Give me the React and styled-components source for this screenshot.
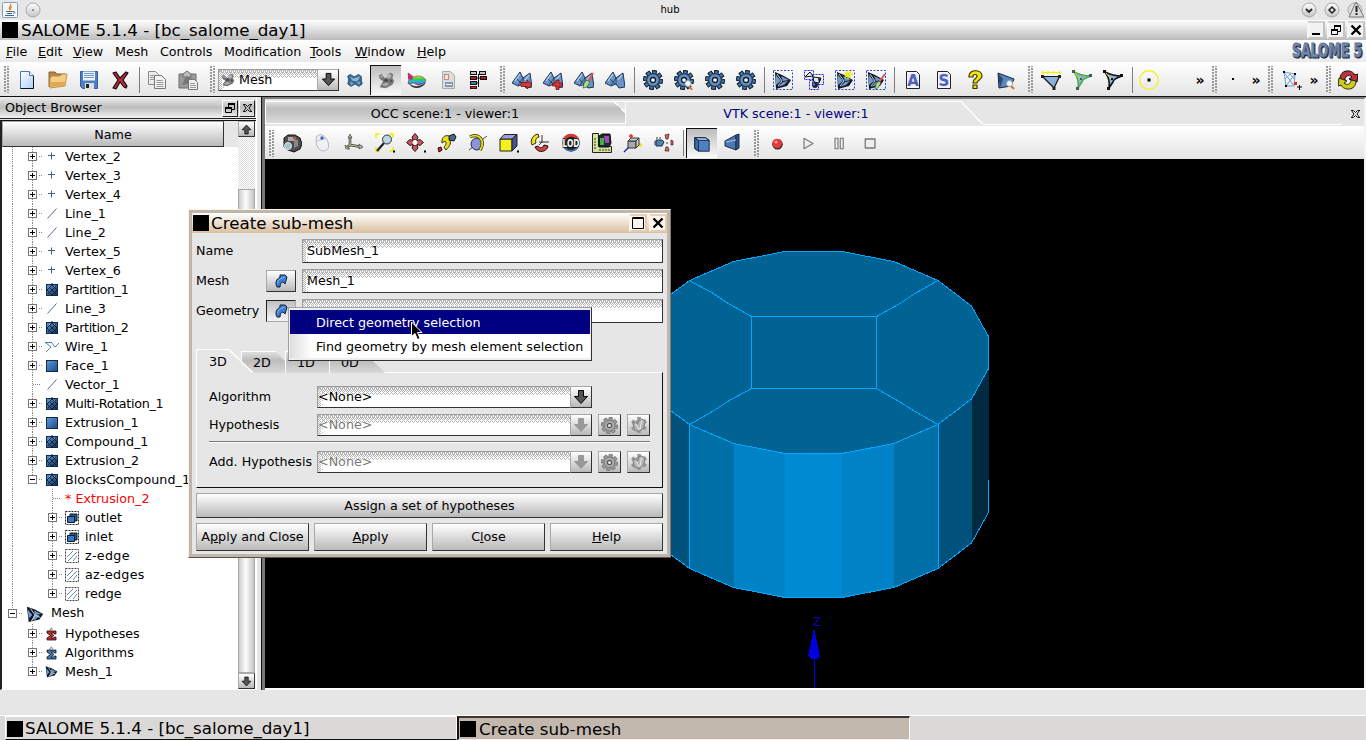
import React from "react";
import styled, { createGlobalStyle, css } from "styled-components";

const Global = createGlobalStyle`
  * { box-sizing: border-box; }
  body { margin: 0; background: #e6e6e6; overflow: hidden; }
  svg { display: block; flex: none; }
`;

const Screen = styled.div`
  position: relative;
  width: 1366px;
  height: 740px;
  display: flex;
  flex-direction: column;
  overflow: hidden;
  background: #e6e6e6;
  color: #000;
  font: 12.7px/16px "DejaVu Sans", sans-serif;
  white-space: nowrap;
`;

/* ---------- frame bars ---------- */
const HubBar = styled.div`
  flex: none;
  height: 20px;
  display: flex;
  align-items: center;
  justify-content: space-between;
  background: #e7e7e7;
  font-size: 10px;
  padding: 0 0 0 2px;
`;
const HubSide = styled.div`
  display: flex;
  width: ${(p) => p.$w}px;
  gap: 7px;
  align-items: center;
`;

const gloss = "linear-gradient(#ffffff, #b9b9b9)";

const TitleBar = styled.div`
  flex: none;
  height: 20px;
  display: flex;
  align-items: center;
  padding: 0 1px 0 2px;
  background: linear-gradient(#ffffff, #bcbcbc);
  font-size: 16.7px;
  line-height: 18px;
`;
const BlackSquare = styled.span`
  flex: none;
  width: 16px;
  height: 16px;
  margin-right: ${(p) => p.$gap ?? 3}px;
  background: #000;
`;
const TitleText = styled.span`
  flex: 1;
`;
const FrameButton = styled.span`
  width: 18px;
  height: 18px;
  margin-left: 2px;
  display: flex;
  align-items: center;
  justify-content: center;
  border: 2px solid ${(p) => (p.$warm ? "#e2cbb1" : "#c2c2c2")};
  border-left-color: ${(p) => (p.$warm ? "#fff4e6" : "#f6f6f6")};
  border-top-color: ${(p) => (p.$warm ? "#e6d2bb" : "#d0d0d0")};
  background: ${(p) => (p.$warm ? "#fdf6ee" : "#f2f2f2")};
`;

const MenuBar = styled.div`
  flex: none;
  height: 22px;
  display: flex;
  align-items: center;
  padding: 2px 0 0 6px;
  background: linear-gradient(#ffffff, #e9e9e9);
`;
const MenuItem = styled.span`
  width: ${(p) => p.$w}px;
`;
const Logo = styled.div`
  margin-left: auto;
`;

/* ---------- toolbars ---------- */
const ToolBar = styled.div`
  flex: none;
  height: ${(p) => p.$h}px;
  display: flex;
  align-items: center;
  padding-top: ${(p) => p.$pt || 0}px;
  background: linear-gradient(#ffffff, #e4e4e4);
`;
const ToolButton = styled.span`
  flex: none;
  width: 31px;
  height: 30px;
  display: flex;
  align-items: center;
  justify-content: center;
  ${(p) =>
    p.$pressed &&
    css`
      border-left: 1px solid #111;
      border-top: 1px solid #111;
      background: linear-gradient(#bdbdbd, #fafafa);
    `}
`;
const Handle = styled.span`
  flex: none;
  width: 5px;
  height: 27px;
  margin: 0 ${(p) => p.$r}px 0 ${(p) => p.$l}px;
  background:
    linear-gradient(#999 2px, transparent 2px) 0 0 / 2px 3px repeat-y,
    linear-gradient(#999 2px, transparent 2px) 3px 2px / 2px 3px repeat-y;
`;
const Sep = styled.span`
  flex: none;
  width: 1px;
  height: 26px;
  margin: 0 ${(p) => p.$r ?? 3}px 0 ${(p) => p.$l ?? 2}px;
  background: #7d7d7d;
`;
const More = styled.span`
  flex: none;
  width: 12px;
  text-align: center;
  font-weight: bold;
  font-size: 14px;
  margin-left: ${(p) => p.$l}px;
`;

/* ---------- sunken fields ---------- */
const dot = (fill) => `linear-gradient(90deg, #b4b4b4 ${fill}px, transparent ${fill}px)`;
const dither = css`
  background:
    ${dot(3)} 0 0 / 4px 1px repeat-x,
    ${dot(1)} 0 1px / 2px 1px repeat-x,
    ${dot(3)} 2px 2px / 4px 1px repeat-x,
    ${dot(1)} 1px 3px / 2px 1px repeat-x,
    ${dot(1)} 0 4px / 2px 1px repeat-x,
    ${dot(1)} 1px 5px / 4px 1px repeat-x,
    ${dot(1)} 0 6px / 2px 1px repeat-x,
    ${dot(1)} 3px 7px / 4px 1px repeat-x,
    linear-gradient(#b4b4b4 1px, transparent 1px) 0 0 / 1px 2px repeat-y,
    linear-gradient(#b4b4b4 1px, transparent 1px) 1px 1px / 1px 2px repeat-y,
    linear-gradient(#b4b4b4 1px, transparent 1px) 2px 0 / 1px 2px repeat-y,
    linear-gradient(#b4b4b4 1px, transparent 1px) 4px 1px / 1px 4px repeat-y,
    #fff;
`;
const Field = styled.div`
  width: ${(p) => p.$w}px;
  height: 24px;
  padding: 0 4px;
  line-height: 22px;
  border: 1px solid #9c9c9c;
  border-right-color: #333;
  border-bottom-color: #333;
  ${dither}
`;
const ComboBox = styled.div`
  width: ${(p) => p.$w}px;
  height: 22px;
  display: flex;
  align-items: stretch;
  color: ${(p) => (p.$off ? "#7a7a7a" : "#000")};
`;
const ComboText = styled.div`
  flex: 1;
  display: flex;
  align-items: center;
  gap: 4px;
  padding-left: ${(p) => p.$pad || 0}px;
  border: 1px solid #9c9c9c;
  border-right: 0;
  border-bottom-color: #333;
  ${dither}
`;
const raised = css`
  border: 1px solid #a8a8a8;
  border-right-color: #333;
  border-bottom-color: #333;
  background: ${gloss};
`;
const ComboArrow = styled.div`
  width: 22px;
  display: flex;
  align-items: center;
  justify-content: center;
  ${raised}
`;

/* ---------- object browser ---------- */
const Main = styled.div`
  flex: none;
  height: 594px;
  display: flex;
  border-top: 1px solid #111;
`;
const Dock = styled.div`
  width: 256px;
  display: flex;
  flex-direction: column;
`;
const DockTitle = styled.div`
  height: 22px;
  display: flex;
  align-items: center;
  padding: 1px 0 0 5px;
  background: linear-gradient(#ededed, #bdbdbd 50%, #f2f2f2);
  border-bottom: 1px solid #222;
`;
const DockLabel = styled.span`
  flex: 1;
`;
const DockButton = styled.span`
  width: 16px;
  height: 17px;
  margin-right: 1px;
  display: flex;
  align-items: center;
  justify-content: center;
  border: 1px solid #fff;
  border-right-color: #222;
  border-bottom-color: #222;
`;
const TreeFrame = styled.div`
  flex: 1;
  display: flex;
  margin-top: 1px;
  border-top: 1px solid #111;
  border-left: 2px solid #222;
  border-bottom: 1px solid #fff;
  background: #fff;
`;
const TreeBody = styled.div`
  width: 236px;
  display: flex;
  flex-direction: column;
`;
const HeaderStrip = styled.div`
  height: 26px;
  flex: none;
  background: #e6e6e6;
`;
const HeaderCell = styled.div`
  width: 222px;
  height: 26px;
  line-height: 25px;
  text-align: center;
  ${raised}
`;
const Row = styled.div`
  height: ${(p) => p.$h || 19}px;
  display: flex;
  align-items: center;
  padding-left: 1px;
  color: ${(p) => p.$c || "#000"};
`;
const Name = styled.span`
  letter-spacing: ${(p) => p.$ls || 0}px;
  margin-left: ${(p) => p.$l || 0}px;
  padding-bottom: ${(p) => p.$pb || 0}px;
`;
const Guide = styled.span`
  flex: none;
  width: 20px;
  height: 100%;
  display: flex;
  align-items: center;
  ${(p) =>
    p.$v !== "none" &&
    css`
      background: linear-gradient(#8a8a8a 1px, transparent 1px) 9px 0 / 1px 2px repeat-y;
    `}
  ${(p) =>
    p.$v === "half" &&
    css`
      background: repeating-linear-gradient(#8a8a8a 0 1px, transparent 1px 2px) 9px 0 / 1px 10px no-repeat;
    `}
`;
const HDots = styled.span`
  width: ${(p) => p.$w}px;
  height: 1px;
  margin-left: ${(p) => p.$l || 0}px;
  background: linear-gradient(90deg, #8a8a8a 1px, transparent 1px) 0 0 / 2px 1px;
`;
const Expander = styled.span`
  flex: none;
  width: 9px;
  height: 9px;
  margin: 0 2px 0 5px;
  border: 1px solid #777;
  background:
    linear-gradient(#000, #000) center / 5px 1px no-repeat,
    linear-gradient(#000, #000) center / ${(p) => (p.$open ? "0 0" : "1px 5px")} no-repeat,
    #fff;
`;
const RowIcon = styled.span`
  flex: none;
  width: ${(p) => p.$w}px;
  padding-left: ${(p) => p.$l}px;
`;
const ScrollBar = styled.div`
  width: 17px;
  display: flex;
  flex-direction: column;
  align-items: stretch;
  background: repeating-conic-gradient(#dcdcdc 0 25%, #fff 0 50%) 0 0 / 2px 2px;
`;
const ScrollArrow = styled.div`
  height: 16px;
  display: flex;
  align-items: center;
  justify-content: center;
  ${raised}
`;
const ScrollThumb = styled.div`
  flex: 1;
  margin-top: 52px;
  border: 1px solid #a8a8a8;
  background: linear-gradient(90deg, #ccc, #fdfdfd 45%, #c4c4c4);
`;
const Splitter = styled.div`
  width: 9px;
  background: linear-gradient(90deg, #fff 1px, #e6e6e6 1px 5px, #111 5px 6px, #777 6px);
`;

/* ---------- viewer ---------- */
const Viewer = styled.div`
  flex: 1;
  display: flex;
  flex-direction: column;
  border-top: 2px solid #7c7c7c;
  border-right: 2px solid #f4f4f4;
  border-bottom: 2px solid #fff;
`;
const ViewTabs = styled.div`
  height: 27px;
  display: flex;
  padding-top: 2px;
  background: #e6e6e6;
`;
const OccTab = styled.div`
  width: 361px;
  height: 23px;
  padding-right: 1px;
  text-align: center;
  line-height: 24px;
  border: 1px solid #fff;
  background:
    linear-gradient(to top right, transparent 50%, #fff 50%, #fff 56%, #e6e6e6 56%) right top / 11px 11px no-repeat,
    linear-gradient(#e0e0e0, #bfbfbf 30%, #c8c8c8 60%, #dcdcdc);
`;
const VtkTab = styled.div`
  width: 335px;
  height: 24px;
  padding-left: 5px;
  line-height: 24px;
  text-align: center;
  color: #000080;
  border-top: 1px solid #fff;
`;
const TabTail = styled.div`
  flex: 1;
  height: 24px;
  border-bottom: 1px solid #fff;
`;
const TabClose = styled.div`
  width: 22px;
  padding: 8px 0 0 8px;
`;
const Canvas = styled.div`
  flex: 1;
  background: #000;
  overflow: hidden;
`;

/* ---------- dialog ---------- */
const Dialog = styled.div`
  position: absolute;
  left: 188px;
  top: 209px;
  width: 483px;
  height: 349px;
  display: flex;
  flex-direction: column;
  border: 1px solid #fff3e4;
  border-right-color: #84796e;
  border-bottom-color: #5a524a;
  box-shadow: inset 0 0 0 3px #bfb5aa;
  padding: 3px;
  background: #e6e6e6;
`;
const DialogTitle = styled.div`
  flex: none;
  height: 20px;
  display: flex;
  align-items: center;
  padding-left: 1px;
  margin-bottom: 1px;
  font-size: 16.7px;
  line-height: 20px;
  background: linear-gradient(#ffffff, #dabf9f);
`;
const DialogBody = styled.div`
  display: flex;
  flex-direction: column;
  padding: 5px 4px 0 4px;
  background: #e6e6e6;
`;
const FormRow = styled.div`
  display: flex;
  align-items: center;
  height: 24px;
  margin-bottom: 6px;
`;
const Label = styled.span`
  width: ${(p) => p.$w}px;
  padding-left: ${(p) => p.$l || 0}px;
  flex: none;
`;
const IconButton = styled.span`
  flex: none;
  width: ${(p) => p.$w || 23}px;
  height: 22px;
  margin-right: ${(p) => p.$r || 0}px;
  display: flex;
  align-items: center;
  justify-content: center;
  ${raised}
  ${(p) =>
    p.$down &&
    css`
      border-color: #222 #aaa #aaa #222;
      background: linear-gradient(#c0c0c0, #f4f4f4);
    `}
`;
const TabRow = styled.div`
  height: 24px;
  margin-top: 20px;
  display: flex;
  position: relative;
`;
const TabShape = styled.div`
  flex: none;
  width: 56px;
  margin-left: ${(p) => p.$l || 0}px;
  margin-top: 2px;
  height: 22px;
  padding: 3px 0 0 11px;
  border-left: 1px solid #fff;
  border-top: 1px solid #fff;
  background: linear-gradient(#dedede, #bdbdbd 40%, #d8d8d8);
  clip-path: polygon(0 0, calc(100% - 22px) 0, 100% 100%, 0 100%);
`;
const ActiveTab = styled.div`
  flex: none;
  width: 57px;
  height: 24px;
  margin-right: -12px;
  padding: 5px 0 0 13px;
  z-index: 1;
  background: linear-gradient(#fff, #fff) 0 0 / 1px 100% no-repeat, linear-gradient(#fff, #fff) 0 0 / 33px 1px no-repeat,
    #e6e6e6;
  clip-path: polygon(0 0, 33px 0, 100% 100%, 0 100%);
`;
const SlopeLine = styled.svg`
  position: absolute;
  left: 33px;
  top: 0;
  z-index: 2;
`;
const Pane = styled.div`
  height: 116px;
  margin-top: -1px;
  padding: 13px 12px 0 11px;
  border: 1px solid #fff;
  border-right-color: #111;
  border-bottom-color: #111;
`;
const PaneRow = styled.div`
  display: flex;
  align-items: center;
  height: 22px;
  margin-bottom: ${(p) => p.$mb}px;
`;
const PaneRule = styled.div`
  height: 2px;
  border-top: 1px solid #777;
  border-bottom: 1px solid #fff;
  margin: 5px 0 8px 1px;
`;
const Button = styled.div`
  flex: 1;
  text-align: center;
  ${raised}
  height: ${(p) => p.$h}px;
  line-height: ${(p) => p.$h - 2}px;
`;
const ButtonRow = styled.div`
  display: flex;
  gap: 5px;
  margin-top: 5px;
`;
const Popup = styled.div`
  position: absolute;
  left: 288px;
  top: 307px;
  width: 304px;
  height: 54px;
  padding: 2px 1px;
  border: 1px solid #a0a0a0;
  border-right-color: #333;
  border-bottom-color: #333;
  background: #eee;
`;
const PopupItem = styled.div`
  height: 24px;
  line-height: 26px;
  padding-left: 26px;
  color: ${(p) => (p.$on ? "#fff" : "#000")};
  background: ${(p) => (p.$on ? "#000080" : "linear-gradient(90deg, #dedede, #fff 22px)")};
`;
const Cursor = styled.svg`
  position: absolute;
  left: 410px;
  top: 321px;
`;

/* ---------- bottom ---------- */
const StatusBar = styled.div`
  flex: none;
  height: 26px;
  border-bottom: 1px solid #fff;
  background: #e6e6e6;
`;
const TaskBar = styled.div`
  flex: none;
  height: 24px;
  display: flex;
  padding-left: 5px;
  background: #dbd9d7;
  font-size: 16.7px;
  line-height: 21px;
`;
const Task = styled.div`
  width: ${(p) => p.$w}px;
  display: flex;
  align-items: center;
  padding: 1px 0 0 1px;
  border: 1px solid #fff;
  border-bottom: 1px solid #111;
  ${(p) =>
    p.$down &&
    css`
      background: #c2b8ae;
      border-top: 2px solid #3a3530;
      border-left: 2px solid #111;
      border-bottom: 1px solid #f6efe8;
    `}
`;

/* ---------- icons ---------- */
const Ico = ({ s = 20, children }) => (
  <svg width={s} height={s} viewBox="0 0 20 20" strokeLinejoin="round">
    {children}
  </svg>
);
const BLUE = "#5c86bb";

const NewDoc = () => (
  <Ico>
    <defs>
      <linearGradient id="doc" x2="1" y2="1"><stop offset="0" stopColor="#fff" /><stop offset="1" stopColor="#a9cdf8" /></linearGradient>
    </defs>
    <path d="M3.500 1.500h9l4 4v13h-13z" fill="url(#doc)" stroke="#4a76b5" />
    <path d="M16.500 6v12.500h-13" fill="none" stroke="#111" />
    <path d="M12.500 1.500v4h4" fill="#fff" stroke="#4a76b5" />
  </Ico>
);
const Folder = () => (
  <Ico>
    <path d="M1 17V2h6l2 2h8v4" fill="#b98445" stroke="#8c6228" />
    <path d="M2 8l2-2h8l2-2h5l-2 12-15 2z" fill="#f3cd84" stroke="#c3934b" />
    <path d="M3 12h14l-1 4-13 1z" fill="#e0a852" />
  </Ico>
);
const Floppy = () => (
  <Ico>
    <path d="M1.500 1.500h17v17h-15l-2-2z" fill="#4f7fc0" stroke="#2f5fa3" />
    <path d="M4 1.500h12v9H4z" fill="#eef4fb" />
    <path d="M5 3.500h10M5 5.500h10M5 7.500h10" stroke="#6f97c9" />
    <path d="M6 13h9v6H6z" fill="#ddd" />
    <path d="M7 14h3v4H7z" fill="#222" />
  </Ico>
);
const Cross = () => (
  <Ico>
    <path d="M3 3l3-1 4 6 6-6 2 1-5 7 4 6-1 2-2-1-4-5-4 7-3-1 5-8z" fill="#b5303a" stroke="#140406" strokeWidth="1.200" />
  </Ico>
);
const Copy = () => (
  <Ico>
    <path d="M1.500 1.500h7l3 3v10h-10z" fill="#ececec" stroke="#8a8a8a" />
    <path d="M7.500 5.500h7l4 4v9h-11z" fill="#f2f2f2" stroke="#7a7a7a" />
    <path d="M3 5.500h4M3 7.500h4M3 9.500h4M9.500 10.500h6M9.500 12.500h7M9.500 14.500h7M9.500 16.500h7" stroke="#999" />
  </Ico>
);
const Paste = () => (
  <Ico>
    <path d="M1 4h17v14H1z" fill="#9a9a9a" stroke="#6d6d6d" />
    <path d="M5 4l4-3 4 3v3H5z" fill="#bbb" stroke="#6d6d6d" />
    <path d="M4 15l3-7 5-1 3 3-5 4z" fill="#777" />
    <path d="M10.500 9.500h6l3 3v7h-9z" fill="#f0f0f0" stroke="#777" />
    <path d="M12 13.500h5M12 15.500h6M12 17.500h6" stroke="#999" />
  </Ico>
);
const MeshBlob = ({ s = 17 }) => (
  <Ico s={s}>
    <path d="M1 4l3-2 4 5 3-1V3l4-2 3 2-1 4 2 4-2 4-8 4-7-1 2-4 2-3-4-3z" fill="#777" />
    <path d="M10 3l3-1 3 2-1 3-4 1z" fill="#b4b4b4" />
    <path d="M4 15l6-3 3 2-4 3z" fill="#aaa" />
    <path d="M2 4l2-1 3 3-3 1z" fill="#9c9c9c" />
    <path d="M8 8l4 1-1 3-4-1zM14 9l3 1-2 3z" fill="#4a4a4a" />
  </Ico>
);
const GeomBlob = () => (
  <Ico s={16}>
    <path d="M1 5l3-2 5 3 6-3 3 3v4l1 5-4 3-5-3-5 3-4-3 1-5z" fill="#386a94" stroke="#244a6a" />
    <path d="M3 5l5 3 4-1 4-2-1 4-3 3-5-1z" fill="#8ab5d6" />
    <path d="M4 12l4 2-3 3zM12 13l4-1v4z" fill="#7fb0d4" />
  </Ico>
);
const Fish = () => (
  <Ico>
    <defs>
      <linearGradient id="rain" x2="0" y2="1">
        <stop offset="0" stopColor="#f07010" /><stop offset=".25" stopColor="#f0e020" /><stop offset=".5" stopColor="#30d040" />
        <stop offset=".75" stopColor="#20b0e8" /><stop offset="1" stopColor="#c020c0" />
      </linearGradient>
    </defs>
    <path d="M2 13c5 5 13 4 17-2l-1 3c-4 5-12 5-15 1z" fill="#333" />
    <path d="M1 3l6 4c4-2 9-1 12 3-3 6-9 6-12 3l-6 1 1-5z" fill="url(#rain)" stroke="#444" strokeWidth=".6" />
    <path d="M1 3l5 4-1 3-4-1z" fill="#d02080" />
  </Ico>
);
const Med = () => (
  <Ico>
    <path d="M4.500 1.500h8l4 4v13h-12z" fill="#ddd" stroke="#aaa" />
    <path d="M6 4h5v6H6z" fill="#c98a80" /><path d="M7 5h3v4H7z" fill="#f0e4e0" />
    <path d="M7 12h8v5H7z" fill="#8894b5" />
    <path d="M8 14.500h6" stroke="#fff" />
  </Ico>
);
const Scheme = () => (
  <Ico>
    <path d="M1 1h7v4H1zM10 1h7v4h-7zM1 6h7v4H1zM11 6h7v4h-7zM1 11h7v4H1zM1 16h7v3H1z" fill="#111" />
    <path d="M2 3h5M11 3h5" stroke="#fff" strokeWidth="1.500" />
    <path d="M2 8h5M12 8h5M2 17.500h5" stroke="#d22" strokeWidth="1.500" />
    <path d="M2 13h5" stroke="#4ad" strokeWidth="1.500" />
    <path d="M9.500 4v13M8 8h3M8 13h2" stroke="#111" />
  </Ico>
);
const Wings = ({ badge }) => (
  <Ico>
    <path d="M0 13L8 2l3 6 7-5 2 14-6 1-3-4-5 2z" fill="#6a94c8" stroke="#1c3350" />
    <path d="M11 8l-5 7M11 8v6M5 9l5 5" fill="none" stroke="#1c3350" strokeWidth=".8" />
    <path d="M8 4L3 11M17 5l-4 5" fill="none" stroke="#c4daf2" strokeWidth="1.200" />
    {badge === "arrow" && <path d="M9 12.500h6V10l5 4.500-5 4.500v-2.500H9z" fill="#dd3434" stroke="#5a0c0c" strokeWidth=".7" />}
    {badge === "plus" && <path d="M13 10h3v3h3.500v3H16v3.500h-3V16H9.500v-3H13z" fill="#dd3434" stroke="#5a0c0c" strokeWidth=".7" />}
    {badge === "brush" && (
      <g><path d="M19 3l-5 9" stroke="#d55" strokeWidth="2.200" /><path d="M13 10l3 2-3 5-4 1 1-5z" fill="#a6e07a" stroke="#234" strokeWidth=".6" /></g>
    )}
  </Ico>
);
const Gear = ({ s = 20, grey, lens }) => (
  <Ico s={s}>
    {[0, 45, 90, 135, 180, 225, 270, 315].map((a) => (
      <rect key={a} x="8" y="0.500" width="4" height="5" fill={grey ? "#9a9a9a" : "#44709f"} stroke={grey ? "#777" : "#111d2c"} transform={`rotate(${a + 10} 10 10)`} />
    ))}
    <circle cx="10" cy="10" r="6.300" fill={grey ? "#aaa" : BLUE} stroke={grey ? "#777" : "#1b2c42"} />
    <circle cx="10" cy="10" r="5.300" fill={grey ? "#aaa" : "#6590c4"} />
    <circle cx="10" cy="10" r="2.500" fill={grey ? "#ddd" : "#f4f6f8"} stroke={grey ? "#555" : "#111d2c"} strokeWidth="1.300" />
    {lens && <g><path d="M15 16l3 4" stroke="#e07020" strokeWidth="2" /><circle cx="14" cy="13.500" r="3" fill="#f6fafd" stroke="#8aa" /></g>}
  </Ico>
);
const GreyWings = () => (
  <Ico s={18}>
    {[0, 60, 120, 180, 240, 300].map((a) => (
      <rect key={a} x="8" y="1" width="4" height="5" fill="#999" transform={`rotate(${a} 10 10)`} />
    ))}
    <circle cx="10" cy="10" r="6" fill="#9c9c9c" />
    <path d="M5 16L3 7l5 2 3-6 6 2-2 9-5 3z" fill="#b4b4b4" stroke="#777" />
    <path d="M6 8l4 7M13 5l-2 10" stroke="#f2f2f2" />
  </Ico>
);
const MeshCore = () => (
  <g>
    <path d="M2 2l7 3 9 5-4 6-11 3z" fill="#0e1722" />
    <path d="M3 5l5 6-5 4zM8 6l8 4-6 1zM5 17l5-5 5-1-4 4z" fill="#6f9ace" />
    <path d="M4 4l5 7-4 5" fill="none" stroke="#fff" strokeWidth=".8" />
  </g>
);
const SelMesh = ({ badge }) => (
  <Ico>
    <rect x=".5" y=".5" width="19" height="19" fill="none" stroke="#2a4ac0" strokeDasharray="2 1.500" />
    <MeshCore />
    {badge === "star" && <path d="M13 0v9M9 4.500h9M10 1.500l6 6M16 1.500l-6 6" stroke="#e8e81e" strokeWidth="1.300" />}
    {badge === "brush" && (
      <g><path d="M19 4l-6 8" stroke="#d55" strokeWidth="2" /><path d="M13 11l2 2-3 5-3 1 1-5z" fill="#a6e07a" stroke="#345" strokeWidth=".6" /></g>
    )}
  </Ico>
);
const SelGroup = () => (
  <Ico>
    <rect x=".5" y=".5" width="9" height="9" fill="none" stroke="#22e" strokeDasharray="2 1" />
    <rect x="8.500" y="4.500" width="11" height="10" fill="none" stroke="#22e" strokeDasharray="2 1" />
    <rect x="5.500" y="10.500" width="9" height="9" fill="none" stroke="#22e" strokeDasharray="2 1" />
    <path d="M1 7l5-5 3 4zM9 7l8 1-2 5-5-1z" fill="#dce6f2" stroke="#111" />
    <path d="M14 8l3 1-2 4z" fill="#111" />
    <circle cx="11" cy="15" r="3" fill="#16283a" /><circle cx="10" cy="14.500" r="1" fill="#6f9ace" />
  </Ico>
);
const LetterDoc = ({ c }) => (
  <Ico>
    <path d="M3.500 1.500h10l3 3v14h-13z" fill="#f4f6ff" stroke="#222" />
    <path d="M5 5h10M5 8h10M5 11h10M5 14h10" stroke="#cfd6ee" />
    <text x="10" y="16" fontSize="15" fontFamily="DejaVu Sans" fontWeight="bold" textAnchor="middle" fill="#5060b8">{c}</text>
  </Ico>
);
const Question = () => (
  <Ico>
    <path d="M4 6c0-7 13-7 13 0 0 4-5 4-5 7H8c0-5 4-4 4-7 0-2-4-2-4 0v1H4zM8 15h4v3.500H8z" fill="#f0e510" stroke="#3a3600" strokeWidth="1.200" />
  </Ico>
);
const MeshFind = () => (
  <Ico>
    <path d="M2 3l16 6-3 7-12 2z" fill={BLUE} stroke="#16263a" />
    <path d="M2 3l2 15 3-9z" fill="#27486f" />
    <path d="M15 16l3 3" stroke="#e07020" strokeWidth="2" />
    <circle cx="13.500" cy="13.500" r="3" fill="#f6fafd" stroke="#9ab" />
  </Ico>
);
const Ruler = () => (
  <Ico>
    <path d="M1 2.500h18M1.500 .5v4M18.500 .5v4M7 1v3M13 1v3" stroke="#f0f000" strokeWidth="1.200" />
    <path d="M1.500 6.500h17L13 18z" fill="#8db1de" stroke="#111" strokeWidth="1.200" />
    <path d="M0 5h3v3H0zM17 5h3v3h-3zM11.500 17h3v3h-3z" fill="#222" />
  </Ico>
);
const Tri = ({ c }) => (
  <Ico>
    <path d="M2 2c4 2 10 4 17 4-6 2-9 4-9 6l-4 6c1-6-1-12-4-16z" fill="#8db1de" stroke={c} strokeWidth="1.600" />
    <path d="M3 3l5 6" stroke="#dede20" />
    <path d="M0 0h3v3H0zM17 4h3v3h-3zM8 8h2v2H8zM4 17h3v3H4z" fill={c === "#111" ? "#111" : "#456"} />
  </Ico>
);
const CircleDot = () => (
  <Ico>
    <circle cx="10" cy="10" r="9.300" fill="none" stroke="#f2f200" strokeWidth="1.200" />
    <path d="M8.500 8.500h3v3h-3z" fill="#000" />
  </Ico>
);
const Dot = () => <Ico><path d="M8 8h2v2H8z" fill="#000" /></Ico>;
const Quad = () => (
  <Ico>
    <path d="M2 2l11 2-1 12-8 0zM2 2l10 14M13 4L4 16M3 9l5-5 5 6" fill="none" stroke="#6f9fd6" />
    <path d="M1 1h2v2H1zM12 3h2v2h-2zM3 15h2v2H3z" fill="#000" />
    <path d="M12 12h3v3h-3z" fill="#e22" />
    <path d="M15 17h5M17.500 15v5" stroke="#000" />
  </Ico>
);
const Update = () => (
  <Ico>
    <path d="M2 9C2-1 14-1 17 5l3-1-1 8-8-3 3-2c-3-3-7-1-7 3z" fill="#b8333c" stroke="#1c0506" />
    <path d="M18 11c0 10-12 10-15 4l-3 1 1-8 8 3-3 2c3 3 7 1 7-3z" fill="#cfca1e" stroke="#2a2903" />
  </Ico>
);

/* viewer icons */
const Camera = () => (
  <Ico>
    <path d="M2 5l4-3h7l5 3 2 6-2 5-6 3-6-2-4-3z" fill="#4d4d4d" stroke="#111" />
    <path d="M6 4h6v4H6z" fill="#aaa" /><path d="M12 6l4 1v6l-4 2z" fill="#888" /><path d="M11 4h3v2h-3z" fill="#cf4a4a" />
    <circle cx="6" cy="13" r="3.500" fill="#a9c2ca" stroke="#e4e4e4" />
  </Ico>
);
const Mouse = () => (
  <Ico>
    <path d="M4 3c4-3 8-1 11 6 2 6-1 9-5 9-5 0-9-9-6-15z" fill="#eef0f4" stroke="#b5b8bf" />
    <path d="M4 8l9-3" stroke="#bbb" /><circle cx="9" cy="5" r="1.700" fill="#3c62c4" />
  </Ico>
);
const Axes = () => (
  <Ico>
    <path d="M6 3v9l-4 3M6 12l12 2" fill="none" stroke="#3b3b33" strokeWidth="2.600" />
    <path d="M6 3v9l-4 3M6 12l12 2" fill="none" stroke="#c9c8b4" strokeWidth="1" />
    <path d="M4 5l2-4 2 4zM1 12l1 4 4 0zM15 11l4 3-4 2z" fill="#b8b79f" stroke="#333" strokeWidth=".6" />
  </Ico>
);
const FitZoom = () => (
  <Ico>
    <path d="M1 5V1h4M14 1h4v4M1 14v4h4M18 14v4h-4" fill="none" stroke="#f0f000" strokeWidth="1.500" />
    <path d="M9 10l-7 8" stroke="#222" strokeWidth="2.200" />
    <circle cx="12" cy="6.500" r="4.500" fill="#bcd7e2" stroke="#333" />
    <path d="M18 18.500h2" stroke="#000" strokeWidth="2" />
  </Ico>
);
const Pan = () => (
  <Ico>
    <path d="M9 .5l3 3.500-1 3H7L6 4zM9 18.500L6 15l1-3h4l1 3zM.5 9.500L4 6.500l3 1v4l-3 1zM17.500 9.500L14 12.500l-3-1v-4l3-1z" fill="#c8555b" stroke="#1c0708" strokeWidth=".9" />
    <path d="M9 7v5M6.500 9.500h5" stroke="#fff" strokeWidth="2.600" />
    <path d="M18 18.500h2" stroke="#000" strokeWidth="2" />
  </Ico>
);
const RotArrow = () => (
  <Ico>
    <path d="M12 3l5-2 2 3-2 4-5-1z" fill="#456a98" stroke="#111" />
    <path d="M5 7c1-4 4-5 7-4l0 4c3 2 1 6-3 10l-2-3c2-2 3-4 1-6l-3 2z" fill="#ecdf18" stroke="#333008" />
    <path d="M1 15l3-1 1 3-3 2z" fill="#c33" stroke="#300" />
  </Ico>
);
const Sphere = () => (
  <Ico>
    <path d="M1 17L19 3" stroke="#444" />
    <circle cx="9" cy="11" r="6" fill="#8b95d4" stroke="#222a55" />
    <path d="M2 4c5-3 10-1 12 4 1 3 0 6-2 9" fill="none" stroke="#333008" strokeWidth="3.200" />
    <path d="M2 4c5-3 10-1 12 4 1 3 0 6-2 9" fill="none" stroke="#ecdf18" strokeWidth="1.800" />
  </Ico>
);
const Cube = ({ front, side, top, mark }) => (
  <Ico>
    <path d="M1 6h12v12H1z" fill={front} stroke="#222" />
    <path d="M1 6l4-4.500h13L13 6z" fill={top} stroke="#222" />
    <path d="M13 6l5-4.500v11.500L13 18z" fill={side} stroke="#222" />
    {mark && <path d="M18 18.500h2" stroke="#000" strokeWidth="2" />}
  </Ico>
);
const BlueCube = () => (
  <Ico s={18}>
    <path d="M2 3h12l4 3v12H6l-4-3z" fill="#4d80c0" stroke="#14253c" />
    <path d="M2 3h12l4 3H6z" fill="#9cc2ee" stroke="#14253c" />
    <path d="M2 3l4 3v12l-4-3z" fill="#3c6cab" stroke="#14253c" />
  </Ico>
);
const RotAxes = () => (
  <Ico>
    <path d="M12 2v8M9 9h10M12 9l-3 3" stroke="#333" />
    <path d="M8 1C2 2 0 8 2 12l4-2C5 7 6 5 9 4z" fill="#ecdf18" stroke="#333008" />
    <path d="M5 14c3 7 12 5 13-1l-4-1c-1 3-4 4-6 1z" fill="#c8484c" stroke="#300" />
  </Ico>
);
const Lod = () => (
  <Ico>
    <circle cx="10" cy="10" r="8.500" fill="#222" />
    <path d="M3 7a7.500 7.500 0 0 1 14 0" fill="none" stroke="#d33c3c" strokeWidth="3" />
    <path d="M3 13a7.500 7.500 0 0 0 14 0" fill="none" stroke="#4a6fae" strokeWidth="2" />
    <text x="1.500" y="13.500" fontSize="10" fontFamily="DejaVu Sans" fontWeight="bold" textLength="17" lengthAdjust="spacingAndGlyphs" fill="#fff" stroke="#111" strokeWidth="1.400" paintOrder="stroke">LOD</text>
  </Ico>
);
const Scale = () => (
  <Ico>
    <path d="M.5 .5h6v13h13v6H.5z" fill="#d3e39a" stroke="#222" />
    <path d="M7 3l3-2h8l1 9-2 4H7z" fill="#1c2833" stroke="#111" />
    <path d="M8 5h4v7H8z" fill="#3fae4d" /><path d="M12 3h5v7h-4z" fill="#a14bb2" />
    <path d="M2 15h2M2 12h2M2 9h2M2 6h2M8 16v2M11 16v2M14 16v2M17 16v2" stroke="#333" />
  </Ico>
);
const CubeAxes = () => (
  <Ico>
    <path d="M8 8V1M6 3h4" stroke="#e22" strokeWidth="1.400" />
    <path d="M13 12h6M17 10v4" stroke="#eae000" strokeWidth="1.600" /><path d="M7 13l-6 6" stroke="#22c" strokeWidth="1.400" />
    <path d="M5 8h8v7H5z" fill="#aaa" stroke="#333" /><path d="M5 8l3-3h8l-3 3zM13 8l3-3v7l-3 3z" fill="#ccc" stroke="#333" />
  </Ico>
);
const Probe = () => (
  <Ico>
    <path d="M2 7h6l2 2-2 4H2z" fill="#4e83ac" stroke="#1c3245" />
    <path d="M0 9h2M3 4v2M6 4v2M0 11h2" stroke="#333" />
    <path d="M11 2l4-1-1 5h-2zM11 18h4l-1-4h-2zM17 7l2 1v4l-2 0z" fill="#c96a6e" stroke="#4a1418" strokeWidth=".7" />
    <path d="M12 9l2 2M14 9l-2 2" stroke="#999" />
  </Ico>
);
const Persp = () => (
  <Ico>
    <path d="M2 8l11-6v15L2 13z" fill="#4c79b4" stroke="#1b2c42" />
    <path d="M13 2l3-1v14l-3 2z" fill="#2e5488" stroke="#1b2c42" />
    <path d="M3 9l10-2" stroke="#a9c5e8" />
  </Ico>
);
const Rec = () => <Ico s={15}><circle cx="10" cy="11" r="7" fill="#222" /><circle cx="9.500" cy="10" r="6.500" fill="#e23b3b" /><circle cx="8" cy="8" r="2" fill="#f59a9a" /></Ico>;
const Play = () => <Ico s={15}><path d="M4 3l12 7-12 7z" fill="#eee" stroke="#777" strokeWidth="1.500" /></Ico>;
const Pause = () => <Ico s={15}><path d="M4 3h4v14H4zM11 3h4v14h-4z" fill="#eee" stroke="#777" strokeWidth="1.500" /></Ico>;
const Stop = () => <Ico s={15}><path d="M3 4h13v12H3z" fill="#eee" stroke="#777" strokeWidth="1.700" /></Ico>;

/* small icons */
const DownArrow = ({ off, s = 16, up }) => (
  <svg width={s} height={s} viewBox="0 0 16 16">
    <path
      transform={up ? "rotate(180 8 8)" : undefined}
      d="M5.500 1.500h5v6h4L8 14.500 1.500 7.500h4z"
      fill={off ? "#999" : "#555"}
      stroke={off ? "#999" : "#000"}
    />
  </svg>
);
const BlueArrow = () => (
  <svg width="14" height="14" viewBox="0 0 14 14" strokeLinejoin="round">
    <path d="M3 13C1 9 2 5 6 3.500L6 1h5l2 2-2 7-2-2c-2 0-3 2-3 5z" fill="#3c7fd4" stroke="#0a1c38" />
    <path d="M3.500 9.500c0-3 2-5 5-5.500l2-1" fill="none" stroke="#86b8f4" />
  </svg>
);
const VertexIcon = () => <svg width="14" height="13"><path d="M6.500 2.500v7M3 5.500h7" stroke="#3f6390" /></svg>;
const LineIcon = () => <svg width="14" height="13"><path d="M2.500 11.500l9-10" stroke="#4f6c92" fill="none" /></svg>;
const WireIcon = () => <svg width="14" height="13"><path d="M0 2.500h7M1 3l5 4-5 5M7 3l3 4 4-4" stroke="#4f7cae" fill="none" /></svg>;
const FaceIcon = () => (
  <svg width="14" height="13">
    <defs><linearGradient id="face" x2="1" y2="1"><stop offset="0" stopColor="#5d9be0" /><stop offset="1" stopColor="#1c4a82" /></linearGradient></defs>
    <rect x="1.500" y="1.500" width="11" height="11" fill="url(#face)" stroke="#12294a" />
  </svg>
);
const SolidIcon = () => (
  <svg width="14" height="13">
    <defs><linearGradient id="solid" x2="1" y2="1"><stop offset="0" stopColor="#5d9be0" /><stop offset="1" stopColor="#0e2a50" /></linearGradient></defs>
    <rect x="1.500" y="1.500" width="11" height="11" fill="url(#solid)" stroke="#12294a" />
    <path d="M3 3l8 8M11 3l-8 8M2 7l5-5 5 5-5 5z" stroke="#0c1c30" strokeWidth=".9" fill="none" />
    <path d="M7 0v2M7 12v1" stroke="#0c1c30" />
    <path d="M3 4l2-1M9 3l1 1" stroke="#9cc4f0" strokeWidth=".8" />
  </svg>
);
const GroupFace = () => (
  <svg width="14" height="14">
    <rect x=".5" y=".5" width="13" height="13" fill="none" stroke="#222" strokeDasharray="2 1" />
    <path d="M5 3h7v7H5z" fill="#24568f" stroke="#0c1c30" /><path d="M2.500 5.500h7v6h-7z" fill="#3a78be" stroke="#0c1c30" />
  </svg>
);
const GroupEdge = () => (
  <svg width="14" height="14">
    <rect x=".5" y=".5" width="13" height="13" fill="none" stroke="#444" strokeDasharray="2 1" />
    <path d="M2 8l6-6M3 12l9-9M8 12l4-5" stroke="#7088a8" fill="none" />
  </svg>
);
const Sigma = ({ c }) => (
  <svg width="14" height="14">
    <path d="M2 4h9v3H9.500L9 6H6l3 2.500L6 11h3l.5-1H11v3H2v-2l3.500-2.500L2 6z" fill={c} stroke="#111" strokeWidth=".8" />
    <path d="M5 4c0-4 3-3 2-1" fill="none" stroke="#666" />
  </svg>
);
const MeshIcon = ({ s = 18 }) => (
  <Ico s={s}>
    <path d="M1 2l9 3 9 5-4 6-12 3z" fill="#0e1620" />
    <path d="M2 5l5 6-4 4zM9 6l8 4-7 1zM9 12l6-1-4 5-4 1z" fill="#6f9ad0" />
    <path d="M5 4l5 7-4 7M10 11l6 3" stroke="#fff" fill="none" strokeWidth=".9" />
  </Ico>
);
const ZigX = () => (
  <svg width="11" height="10">
    <path d="M1 1.500h2.500l2 2 2-2H10M1 8.500h2.500l2-2 2 2H10M1.500 1.500l2.500 3.500-2.500 3.500M9.500 1.500L7 5l2.500 3.500" fill="none" stroke="#111" />
  </svg>
);
const Restore = () => (
  <svg width="12" height="12">
    <path d="M4 1h7v2H4zM1 5h7v2H1z" fill="#000" /><path d="M4.500 2v3M10.500 2v5.500H8M1.500 6v4.500h6V6" fill="none" stroke="#000" />
  </svg>
);
const BigX = () => <svg width="12" height="12"><path d="M1.500 1.500l9 9M10.500 1.500l-9 9" stroke="#000" strokeWidth="2.400" /></svg>;
const Round = ({ children }) => (
  <svg width="16" height="16" viewBox="0 0 16 16">
    <defs><linearGradient id="rd" x2="0" y2="1"><stop offset="0" stopColor="#fff" /><stop offset="1" stopColor="#c4c4c4" /></linearGradient></defs>
    <circle cx="8" cy="8" r="7" fill="url(#rd)" stroke="#a8a8a8" />
    {children}
  </svg>
);
const Java = () => (
  <svg width="16" height="16">
    <rect x=".5" y=".5" width="15" height="15" rx="1" fill="#f4f7f9" stroke="#7fa0b4" />
    <path d="M8 2c3 2-3 3 0 6M10 5c-2 1-2 2-1 3" fill="none" stroke="#e8862a" strokeWidth="1.300" />
    <path d="M4 9.500h7M5 11.500h5M3 13.500h9M11 9.500c3 0 2 2 0 2" fill="none" stroke="#41698c" />
  </svg>
);

const U = ({ children }) => <u>{children}</u>;
const menus = [
  ["F", "ile", 32], ["E", "dit", 35], ["V", "iew", 42], ["", "Mesh", 45], ["", "Controls", 64],
  ["", "Modification", 86], ["T", "ools", 45], ["W", "indow", 62], ["H", "elp", 40],
];
const Tools = ({ items }) => items.map((it, i) => <ToolButton key={i}>{it}</ToolButton>);

const fileTools = [<NewDoc />, <Folder />, <Floppy />, <Cross />];
const tree = [
  ["Vertex_2", VertexIcon, 0.1], ["Vertex_3", VertexIcon, 0.1], ["Vertex_4", VertexIcon, 0.1], ["Line_1", LineIcon], ["Line_2", LineIcon],
  ["Vertex_5", VertexIcon, 0.1], ["Vertex_6", VertexIcon, 0.1], ["Partition_1", SolidIcon, -0.35], ["Line_3", LineIcon], ["Partition_2", SolidIcon, -0.35],
  ["Wire_1", WireIcon], ["Face_1", FaceIcon, 0.15], ["Vector_1", LineIcon, 0, true], ["Multi-Rotation_1", SolidIcon, -0.3], ["Extrusion_1", FaceIcon, -0.05],
  ["Compound_1", SolidIcon], ["Extrusion_2", SolidIcon],
];
const groups = [["outlet", GroupFace], ["inlet", GroupFace], ["z-edge", GroupEdge, 0.3], ["az-edges", GroupEdge, 0.3], ["redge", GroupEdge]];

const Node = ({ leaf, open }) =>
  leaf ? <HDots $w={8} $l={10} /> : <><Expander $open={open} /><HDots $w={4} /></>;

const top = [
  [785, 251.5], [842, 251.5], [894, 261.5], [938, 280.5], [971.5, 306], [988.5, 336.5], [988.5, 368.5], [971.5, 399], [938, 424.5],
  [894, 443.5], [842, 453.5], [785, 453.5], [733.5, 443.5], [689.5, 424.5], [655, 399], [638, 368.5], [638, 336.5], [655, 306],
  [689.5, 280.5], [733.5, 261.5],
];
const sides = [
  [6, "#002a40"], [7, "#00527c"], [8, "#006fa8"], [9, "#0082c6"], [10, "#008ad2"], [11, "#0082c6"], [12, "#006fa8"], [13, "#00527c"], [14, "#002a40"],
];
const DEPTH = 144;
const pts = (list) => list.map((p) => p.join(",")).join(" ");

const Scene = () => (
  <svg width="1099" height="530" viewBox="265 159 1099 530" shapeRendering="crispEdges">
    {sides.map(([i, fill]) => {
      const [a, b] = [top[i], top[i + 1]];
      return <polygon key={i} fill={fill} points={pts([a, b, [b[0], b[1] + DEPTH], [a[0], a[1] + DEPTH]])} />;
    })}
    <polygon points={pts(top)} fill="#006394" stroke="#00a8ff" />
    <g fill="none" stroke="#00a8ff">
      <polyline points={pts(top.slice(6, 16).map(([x, y]) => [x, y + DEPTH]))} />
      <path d="M988.500 480v33M938.500 424v144M689.500 424v144" />
      <path d="M751.500 316.500h125v72h-125z" />
      <path d="M689.500 280.500l23 12.500 15 10 24 13.500M938 280.500l-23 13-15 10-23.500 13M689.500 424.500l23-13 15-10 24-13M938 424.500l-23-13-15-9.500-23.500-13.500" />
    </g>
    <path d="M814 628l6 28-3 3h-6l-3-3z" fill="#0000dc" />
    <path d="M814.500 659v30" stroke="#0000ff" />
    <text x="813.5" y="626" fontSize="12" fontFamily="DejaVu Sans" textLength="7" lengthAdjust="spacingAndGlyphs" fill="#0000d8">Z</text>
  </svg>
);

export default function App() {
  return (
    <Screen>
      <Global />
      <HubBar>
        <HubSide $w={64}><Java /><Round><circle cx="8" cy="8" r="1" fill="#777" /></Round></HubSide>
        <span>hub</span>
        <HubSide $w={92}>
          <HubSide $w={20} />
          <Round><path d="M5 7l3 3 3-3" fill="none" stroke="#222" strokeWidth="1.800" /></Round>
          <Round><path d="M8 5l3 3-3 3-3-3z" fill="none" stroke="#222" strokeWidth="1.500" /></Round>
          <svg width="17" height="18"><circle cx="8" cy="9" r="7" fill="#ddd" stroke="#aaa" /><path d="M9 1l8 15H2z" fill="#ddd" stroke="#777" /><path d="M9.500 5v6M9.500 12v2" stroke="#222" strokeWidth="2" /></svg>
        </HubSide>
      </HubBar>
      <TitleBar>
        <BlackSquare />
        <TitleText>SALOME 5.1.4 - [bc_salome_day1]</TitleText>
        <FrameButton><svg width="12" height="12"><path d="M2 10h8" stroke="#000" strokeWidth="2" /></svg></FrameButton>
        <FrameButton><Restore /></FrameButton>
        <FrameButton><BigX /></FrameButton>
      </TitleBar>
      <MenuBar>
        {menus.map(([u, t, w]) => <MenuItem key={t} $w={w}><U>{u}</U>{t}</MenuItem>)}
        <Logo>
          <svg width="76" height="22" fontFamily="DejaVu Sans Condensed, DejaVu Sans" fontWeight="bold" fontSize="19">
            <text x="3" y="16.500" textLength="70" lengthAdjust="spacingAndGlyphs" fill="#1c2430" stroke="#1c2430" aria-hidden="true">SALOME 5</text>
            <text x="2" y="15.500" textLength="70" lengthAdjust="spacingAndGlyphs" fill="#7189ad" stroke="#5c7296" strokeWidth=".8">SALOME 5</text>
          </svg>
        </Logo>
      </MenuBar>
      <ToolBar $h={34} $pt={1}>
        <Handle $l={4} $r={2} />
        <Tools items={fileTools} />
        <Sep $l={4} $r={1} />
        <Tools items={[<Copy />, <Paste />]} />
        <Handle $l={7} $r={3} />
        <ComboBox $w={121}>
          <ComboText $pad={2}><MeshBlob s={14} />Mesh</ComboText>
          <ComboArrow><DownArrow s={15} /></ComboArrow>
        </ComboBox>
        <ToolButton><GeomBlob /></ToolButton>
        <ToolButton $pressed><MeshBlob /></ToolButton>
        <Tools items={[<Fish />, <Med />, <Scheme />]} />
        <Handle $l={6} $r={1} />
        <Tools items={[<Wings badge="arrow" />, <Wings badge="plus" />, <Wings badge="brush" />, <Wings />]} />
        <Sep $l={4} $r={2} />
        <Tools items={[<Gear />, <Gear lens />, <Gear />, <Gear />]} />
        <Sep $l={3} $r={2} />
        <Tools items={[<SelMesh />, <SelGroup />, <SelMesh badge="star" />, <SelMesh badge="brush" />]} />
        <Sep $l={3} $r={2} />
        <Tools items={[<LetterDoc c="A" />, <LetterDoc c="S" />, <Question />, <MeshFind />]} />
        <Handle $l={7} $r={2} />
        <Tools items={[<Ruler />, <Tri c="#4fae46" />, <Tri c="#111" />]} />
        <Sep $l={4} $r={0} />
        <Tools items={[<CircleDot />]} />
        <More $l={30}>»</More>
        <Handle $l={6} $r={1} />
        <Tools items={[<Dot />]} />
        <More $l={1}>»</More>
        <Handle $l={6} $r={3} />
        <Tools items={[<Quad />]} />
        <More $l={1}>»</More>
        <Handle $l={6} $r={1} />
        <Tools items={[<Update />]} />
      </ToolBar>
      <Main>
        <Dock>
          <DockTitle>
            <DockLabel>Object Browser</DockLabel>
            <DockButton><Restore /></DockButton>
            <DockButton><ZigX /></DockButton>
          </DockTitle>
          <TreeFrame>
            <TreeBody>
              <HeaderStrip><HeaderCell>Name</HeaderCell></HeaderStrip>
              {tree.map(([name, Icon, ls, leaf]) => (
                <Row key={name}>
                  <Guide /><Guide><Node leaf={leaf} /></Guide>
                  <RowIcon $w={22} $l={2}><Icon /></RowIcon><Name $ls={ls}>{name}</Name>
                </Row>
              ))}
              <Row>
                <Guide /><Guide $v="half"><Node open /></Guide>
                <RowIcon $w={22} $l={2}><SolidIcon /></RowIcon><Name $ls={0.05}>BlocksCompound_1</Name>
              </Row>
              <Row $c="#ff0000">
                <Guide /><Guide $v="none" /><Guide><Node leaf /></Guide><Name $l={2}>* Extrusion_2</Name>
              </Row>
              {groups.map(([name, Icon, ls], i) => (
                <Row key={name}>
                  <Guide /><Guide $v="none" /><Guide $v={i === 4 ? "half" : "full"}><Node /></Guide>
                  <RowIcon $w={22} $l={2}><Icon /></RowIcon><Name $ls={ls}>{name}</Name>
                </Row>
              ))}
              <Row $h={21}>
                <Guide $v="half"><Node open /></Guide>
                <RowIcon $w={28} $l={3}><MeshIcon /></RowIcon><Name $pb={2}>Mesh</Name>
              </Row>
              {[["Hypotheses", <Sigma c="#c32a2a" />], ["Algorithms", <Sigma c="#3f7ab8" />], ["Mesh_1", <MeshIcon s={13} />]].map(([n, ic], i) => (
                <Row key={n}>
                  <Guide $v="none" /><Guide $v={i === 2 ? "half" : "full"}><Node /></Guide>
                  <RowIcon $w={22} $l={2}>{ic}</RowIcon>{n}
                </Row>
              ))}
            </TreeBody>
            <ScrollBar>
              <ScrollArrow><DownArrow up s={11} /></ScrollArrow>
              <ScrollThumb />
              <ScrollArrow><DownArrow s={11} /></ScrollArrow>
            </ScrollBar>
          </TreeFrame>
        </Dock>
        <Splitter />
        <Viewer>
          <ViewTabs>
            <OccTab>OCC scene:1 - viewer:1</OccTab>
            <VtkTab>VTK scene:1 - viewer:1</VtkTab>
            <svg width="22" height="24"><path d="M0 .5L22 23.500" stroke="#fff" strokeWidth="1.400" /></svg>
            <TabTail />
            <TabClose><ZigX /></TabClose>
          </ViewTabs>
          <ToolBar $h={33} $pt={1}>
            <Handle $l={4} $r={2} />
            <Tools
              items={[
                <Camera />, <Mouse />, <Axes />, <FitZoom />, <Pan />, <RotArrow />, <Sphere />,
                <Cube front="#f6f01c" side="#4b4f94" top="#9aa0d8" mark />, <RotAxes />, <Lod />, <Scale />, <CubeAxes />, <Probe />,
              ]}
            />
            <Sep $l={4} $r={2} />
            <ToolButton $pressed><BlueCube /></ToolButton>
            <ToolButton><Persp /></ToolButton>
            <Handle $l={6} $r={3} />
            <Tools items={[<Rec />, <Play />, <Pause />, <Stop />]} />
          </ToolBar>
          <Canvas><Scene /></Canvas>
        </Viewer>
      </Main>
      <StatusBar />
      <TaskBar>
        <Task $w={452}><BlackSquare $gap={2} />SALOME 5.1.4 - [bc_salome_day1]</Task>
        <Task $w={453} $down><BlackSquare />Create sub-mesh</Task>
      </TaskBar>

      <Dialog>
        <DialogTitle>
          <BlackSquare $gap={2} />
          <TitleText>Create sub-mesh</TitleText>
          <FrameButton $warm><svg width="12" height="12"><path d="M.5 .5h11v11H.5zM0 1.500h12" fill="none" stroke="#000" /></svg></FrameButton>
          <FrameButton $warm><BigX /></FrameButton>
        </DialogTitle>
        <DialogBody>
          <FormRow><Label $w={106}>Name</Label><Field $w={361}>SubMesh_1</Field></FormRow>
          <FormRow><Label $w={70}>Mesh</Label><IconButton $w={30} $r={6}><BlueArrow /></IconButton><Field $w={361}>Mesh_1</Field></FormRow>
          <FormRow><Label $w={70}>Geometry</Label><IconButton $w={30} $r={6} $down><BlueArrow /></IconButton><Field $w={361} /></FormRow>
          <TabRow>
            <ActiveTab>3D</ActiveTab>
            <SlopeLine width="24" height="24"><path d="M0 .5L24 24" stroke="#fff" strokeWidth="1.400" /></SlopeLine>
            <TabShape>2D</TabShape>
            <TabShape $l={-12}>1D</TabShape>
            <TabShape $l={-12}>0D</TabShape>
          </TabRow>
          <Pane>
            <PaneRow $mb={6}>
              <Label $w={109} $l={1}>Algorithm</Label>
              <ComboBox $w={275}><ComboText>&lt;None&gt;</ComboText><ComboArrow><DownArrow /></ComboArrow></ComboBox>
            </PaneRow>
            <PaneRow $mb={0}>
              <Label $w={109} $l={1}>Hypothesis</Label>
              <ComboBox $w={275} $off><ComboText>&lt;None&gt;</ComboText><ComboArrow><DownArrow off /></ComboArrow></ComboBox>
              <Label $w={6} /><IconButton $r={6}><Gear grey s={17} /></IconButton><IconButton><GreyWings /></IconButton>
            </PaneRow>
            <PaneRule />
            <PaneRow $mb={0}>
              <Label $w={109} $l={1}>Add. Hypothesis</Label>
              <ComboBox $w={275} $off><ComboText>&lt;None&gt;</ComboText><ComboArrow><DownArrow off /></ComboArrow></ComboBox>
              <Label $w={6} /><IconButton $r={6}><Gear grey s={17} /></IconButton><IconButton><GreyWings /></IconButton>
            </PaneRow>
          </Pane>
          <ButtonRow><Button $h={25}>Assign a set of hypotheses</Button></ButtonRow>
          <ButtonRow>
            <Button $h={28}>A<U>p</U>ply and Close</Button>
            <Button $h={28}><U>A</U>pply</Button>
            <Button $h={28}>C<U>l</U>ose</Button>
            <Button $h={28}><U>H</U>elp</Button>
          </ButtonRow>
        </DialogBody>
      </Dialog>
      <Popup>
        <PopupItem $on>Direct geometry selection</PopupItem>
        <PopupItem>Find geometry by mesh element selection</PopupItem>
      </Popup>
      <Cursor width="14" height="20">
        <path d="M1.500 1v14.500l3.500-3 2.500 6 2.500-1-2.500-6h4.500z" fill="#000" stroke="#fff" />
      </Cursor>
    </Screen>
  );
}
